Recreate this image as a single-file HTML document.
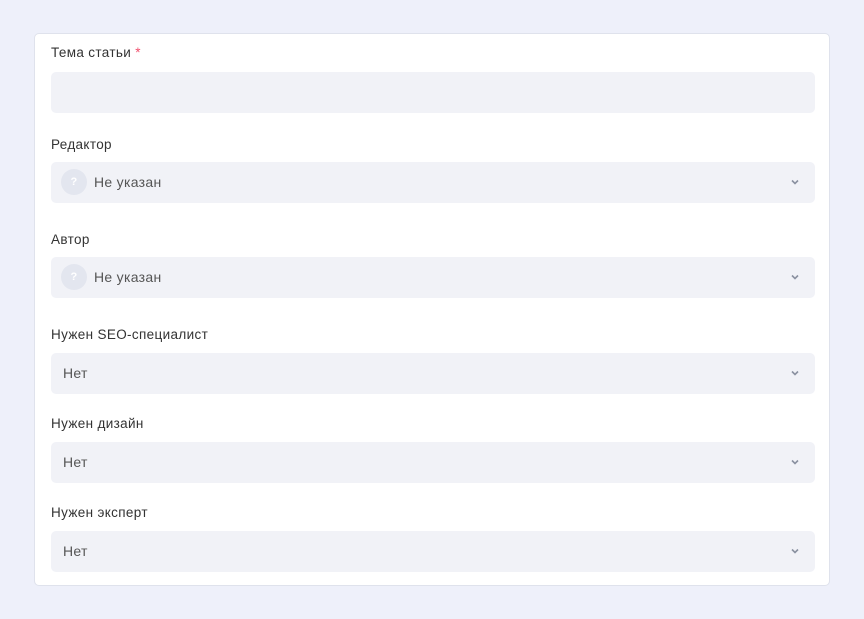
<!DOCTYPE html>
<html><head><meta charset="utf-8"><style>
*{margin:0;padding:0;box-sizing:border-box}
body{width:864px;height:619px;background:#eef0fa;font-family:"Liberation Sans",sans-serif;position:relative;overflow:hidden}
.card{position:absolute;left:34px;top:33px;width:796px;height:553px;background:#fff;border:1px solid #dfe2ec;border-radius:5px}
.lbl{position:absolute;left:51px;font-size:13.5px;letter-spacing:0.35px;color:#333;line-height:16px}
.lbl b{color:#f0506e;font-weight:normal}
.f{position:absolute;left:51px;width:764px;height:41px;background:#f1f2f7;border-radius:5px;font-size:14px;letter-spacing:0.3px;color:#555;line-height:41px}
.f .t{position:absolute;left:12px}
.f .av{position:absolute;left:10px;top:7px;width:26px;height:26px;border-radius:50%;background:#e3e6ef;color:#fff;font-size:11px;font-weight:bold;text-align:center;line-height:26px}
.f .av+.t{left:43px}
.ch{position:absolute;right:16px;top:17px;width:8px;height:6px}
</style></head><body>
<div class="card"></div>
<div class="lbl" style="top:45px">Тема статьи <b>*</b></div>
<div class="f" style="top:72px"></div>
<div class="lbl" style="top:137px">Редактор</div>
<div class="f" style="top:162px"><span class="av">?</span><span class="t">Не указан</span><svg class="ch" viewBox="0 0 8 6"><path d="M1 1.5L4 4.5L7 1.5" fill="none" stroke="#8a91a0" stroke-width="1.6"/></svg></div>
<div class="lbl" style="top:232px">Автор</div>
<div class="f" style="top:257px"><span class="av">?</span><span class="t">Не указан</span><svg class="ch" viewBox="0 0 8 6"><path d="M1 1.5L4 4.5L7 1.5" fill="none" stroke="#8a91a0" stroke-width="1.6"/></svg></div>
<div class="lbl" style="top:327px">Нужен SEO-специалист</div>
<div class="f" style="top:353px"><span class="t">Нет</span><svg class="ch" viewBox="0 0 8 6"><path d="M1 1.5L4 4.5L7 1.5" fill="none" stroke="#8a91a0" stroke-width="1.6"/></svg></div>
<div class="lbl" style="top:416px">Нужен дизайн</div>
<div class="f" style="top:442px"><span class="t">Нет</span><svg class="ch" viewBox="0 0 8 6"><path d="M1 1.5L4 4.5L7 1.5" fill="none" stroke="#8a91a0" stroke-width="1.6"/></svg></div>
<div class="lbl" style="top:505px">Нужен эксперт</div>
<div class="f" style="top:531px"><span class="t">Нет</span><svg class="ch" viewBox="0 0 8 6"><path d="M1 1.5L4 4.5L7 1.5" fill="none" stroke="#8a91a0" stroke-width="1.6"/></svg></div>
</body></html>
